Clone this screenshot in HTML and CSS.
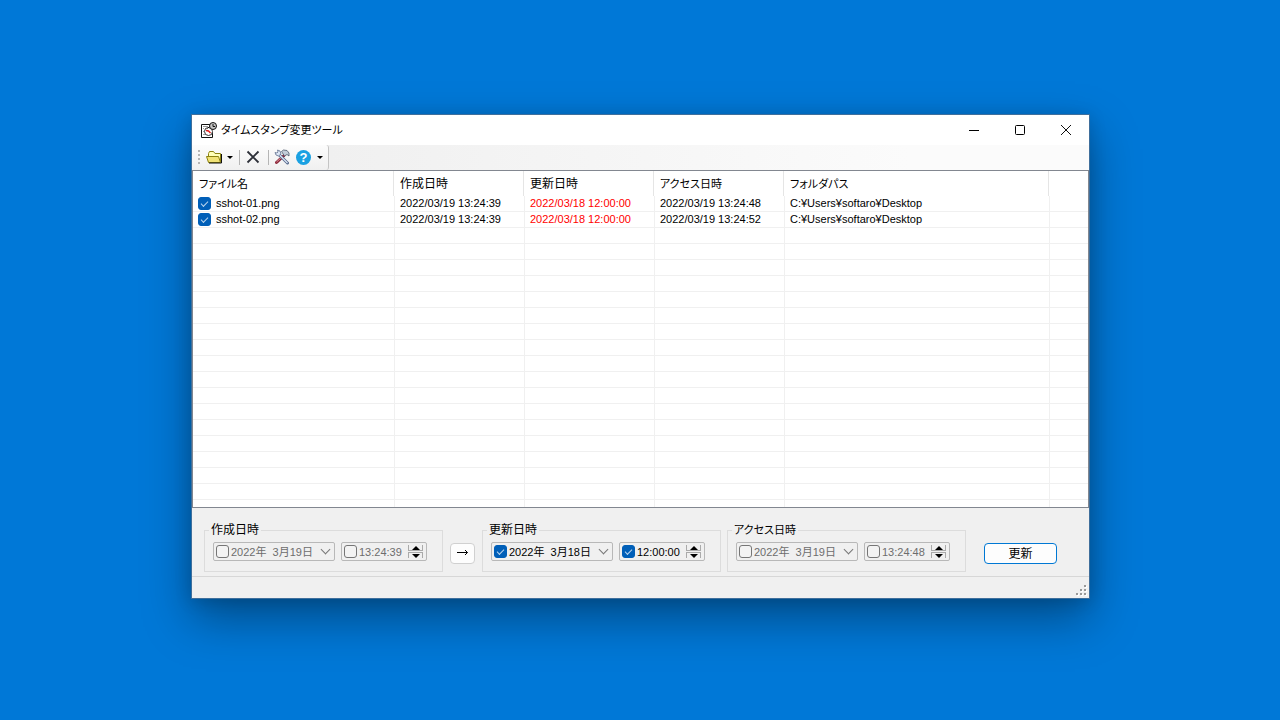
FILE: index.html
```html
<!DOCTYPE html>
<html lang="ja">
<head>
<meta charset="utf-8">
<title>タイムスタンプ変更ツール</title>
<link rel="stylesheet" href="styles.css">
</head>
<body>
<main class="window">
  <header class="titlebar">
    <svg class="app-icon" width="16" height="16" viewBox="0 0 16 16" aria-hidden="true">
      <path d="M9 2.500H.500v13h11V10" fill="#fff" stroke="#111"/>
      <path d="M2 4.500h5M2 6.500h1M2 9.500h1M2 12.500h2" stroke="#999"/>
      <circle cx="7.500" cy="9.500" r="4" fill="#fff" stroke="#333"/>
      <path d="M5 8.500l2.500.5 2 2" fill="none" stroke="#e01818" stroke-width="1.400"/>
      <circle cx="12" cy="4" r="3.500" fill="#c4c4c4" stroke="#111"/>
      <path d="M12 2v2.500h2" fill="none" stroke="#111"/>
      <path d="M8.500 4.500L6.500 6.500" fill="none" stroke="#111"/>
    </svg>
    <h1 class="title">タイムスタンプ変更ツール</h1>
    <div class="caption">
      <button class="cap" aria-label="最小化"><svg width="12" height="12" viewBox="0 0 12 12"><path d="M1 6.500h10" stroke="#000"/></svg></button>
      <button class="cap" aria-label="最大化"><svg width="12" height="12" viewBox="0 0 12 12"><rect x="1.500" y="1.500" width="9" height="9" rx="1" fill="none" stroke="#000"/></svg></button>
      <button class="cap" aria-label="閉じる"><svg width="12" height="12" viewBox="0 0 12 12"><path d="M1 1l10 10M11 1L1 11" stroke="#111"/></svg></button>
    </div>
  </header>

  <div class="toolbar" role="toolbar">
    <div class="strip">
      <span class="grip"></span>
      <button class="tool" aria-label="開く">
        <svg width="17" height="14" viewBox="0 0 17 14"><path d="M2.500 12V3.500l1-2h4l1.500 2h5.500V12" fill="#ffffb8" stroke="#8c8210"/><path d="M2.500 12.500L.500 6.500h12l2 6z" fill="#f1e377" stroke="#8c8210"/><path d="M3 13h12.500V4" fill="none" stroke="#111"/></svg>
      </button>
      <button class="arrow" aria-label="開くメニュー"></button>
      <span class="sep"></span>
      <button class="tool delete" aria-label="削除">
        <svg width="14" height="14" viewBox="0 0 14 14"><path d="M1.500 1.500l11 11M12.500 1.500l-11 11" stroke="#2d3038" stroke-width="1.800"/></svg>
      </button>
      <span class="sep"></span>
      <button class="tool settings" aria-label="設定">
        <svg width="16" height="16" viewBox="0 0 16 16"><path d="M10 6.500L2.500 13.500" stroke="#8c2638" stroke-width="3" stroke-linecap="round"/><path d="M9 7L2.500 13" stroke="#e09aa4"/><path d="M5 5.500l8.500 8.500" stroke="#56688c" stroke-width="3" stroke-linecap="round"/><path d="M5 5.500l8.500 8.500" stroke="#dce6f5" stroke-width="1.200"/><path d="M1 3.500l1 2.500 2.500 1 2.500-2L6 2 3.500 1l.5 2-1 1z" fill="#dce6f5" stroke="#61718e" stroke-width=".8"/><path d="M7.500 2.500l2-1.500 3.500.5 2 2.500v3l-2-1.500-2.500 1.500z" fill="#c3ccd8" stroke="#4d586b" stroke-width=".8"/></svg>
      </button>
      <button class="tool help" aria-label="ヘルプ"><span class="help-mark">?</span></button>
      <button class="arrow" aria-label="ヘルプメニュー"></button>
    </div>
  </div>

  <div class="list">
    <table class="files">
      <colgroup><col class="c-name"><col class="c-date"><col class="c-date"><col class="c-date"><col class="c-path"><col></colgroup>
      <thead><tr><th class="kana">ファイル名</th><th>作成日時</th><th>更新日時</th><th class="kana">アクセス日時</th><th class="kana">フォルダパス</th><th></th></tr></thead>
      <tbody>
        <tr><td><label class="file"><input class="check" type="checkbox" checked>sshot-01.png</label></td><td>2022/03/19 13:24:39</td><td class="changed">2022/03/18 12:00:00</td><td>2022/03/19 13:24:48</td><td>C:¥Users¥softaro¥Desktop</td><td></td></tr>
        <tr><td><label class="file"><input class="check" type="checkbox" checked>sshot-02.png</label></td><td>2022/03/19 13:24:39</td><td class="changed">2022/03/18 12:00:00</td><td>2022/03/19 13:24:52</td><td>C:¥Users¥softaro¥Desktop</td><td></td></tr>
        <tr><td></td><td></td><td></td><td></td><td></td><td></td></tr>
        <tr><td></td><td></td><td></td><td></td><td></td><td></td></tr>
        <tr><td></td><td></td><td></td><td></td><td></td><td></td></tr>
        <tr><td></td><td></td><td></td><td></td><td></td><td></td></tr>
        <tr><td></td><td></td><td></td><td></td><td></td><td></td></tr>
        <tr><td></td><td></td><td></td><td></td><td></td><td></td></tr>
        <tr><td></td><td></td><td></td><td></td><td></td><td></td></tr>
        <tr><td></td><td></td><td></td><td></td><td></td><td></td></tr>
        <tr><td></td><td></td><td></td><td></td><td></td><td></td></tr>
        <tr><td></td><td></td><td></td><td></td><td></td><td></td></tr>
        <tr><td></td><td></td><td></td><td></td><td></td><td></td></tr>
        <tr><td></td><td></td><td></td><td></td><td></td><td></td></tr>
        <tr><td></td><td></td><td></td><td></td><td></td><td></td></tr>
        <tr><td></td><td></td><td></td><td></td><td></td><td></td></tr>
        <tr><td></td><td></td><td></td><td></td><td></td><td></td></tr>
        <tr><td></td><td></td><td></td><td></td><td></td><td></td></tr>
        <tr><td></td><td></td><td></td><td></td><td></td><td></td></tr>
        <tr class="rest"><td></td><td></td><td></td><td></td><td></td><td></td></tr>
      </tbody>
    </table>
  </div>

  <form class="panel">
    <fieldset class="group off">
      <legend>作成日時</legend>
      <div class="fields">
        <div class="field date"><input class="check" type="checkbox" aria-label="作成日を変更"><input class="value" type="text" value="2022年  3月19日" aria-label="作成日"><button class="drop" type="button" aria-label="カレンダー"></button></div>
        <div class="field time"><input class="check" type="checkbox" aria-label="作成時刻を変更"><input class="value" type="text" value="13:24:39" aria-label="作成時刻"><div class="spin"><button class="up" type="button" aria-label="増やす"></button><button class="down" type="button" aria-label="減らす"></button></div></div>
      </div>
    </fieldset>
    <button class="copy" type="button" aria-label="更新日時へコピー"><svg width="13" height="9" viewBox="0 0 13 9"><path d="M1 3.500h10.500M9 1l2.500 2.500L9 6" fill="none" stroke="#000"/></svg></button>
    <fieldset class="group">
      <legend>更新日時</legend>
      <div class="fields">
        <div class="field date"><input class="check" type="checkbox" checked aria-label="更新日を変更"><input class="value" type="text" value="2022年  3月18日" aria-label="更新日"><button class="drop" type="button" aria-label="カレンダー"></button></div>
        <div class="field time"><input class="check" type="checkbox" checked aria-label="更新時刻を変更"><input class="value" type="text" value="12:00:00" aria-label="更新時刻"><div class="spin"><button class="up" type="button" aria-label="増やす"></button><button class="down" type="button" aria-label="減らす"></button></div></div>
      </div>
    </fieldset>
    <fieldset class="group off">
      <legend class="kana">アクセス日時</legend>
      <div class="fields">
        <div class="field date"><input class="check" type="checkbox" aria-label="アクセス日を変更"><input class="value" type="text" value="2022年  3月19日" aria-label="アクセス日"><button class="drop" type="button" aria-label="カレンダー"></button></div>
        <div class="field time"><input class="check" type="checkbox" aria-label="アクセス時刻を変更"><input class="value" type="text" value="13:24:48" aria-label="アクセス時刻"><div class="spin"><button class="up" type="button" aria-label="増やす"></button><button class="down" type="button" aria-label="減らす"></button></div></div>
      </div>
    </fieldset>
    <button class="update" type="button">更新</button>
  </form>

  <footer class="status">
    <svg width="12" height="12" viewBox="0 0 12 12" aria-hidden="true"><path d="M9 1h2v2H9zM5 5h2v2H5zM9 5h2v2H9zM1 9h2v2H1zM5 9h2v2H5zM9 9h2v2H9z" fill="#fff"/><path d="M8 0h2v2H8zM4 4h2v2H4zM8 4h2v2H8zM0 8h2v2H0zM4 8h2v2H4zM8 8h2v2H8z" fill="#999"/></svg>
  </footer>
</main>
</body>
</html>
```
FILE: styles.css
```css
* { box-sizing: border-box; }

body {
  margin: 0;
  min-height: 100vh;
  padding: 114px 190px 0 191px;
  background: #0078d7;
  color: #000;
  font: 11px/16px "Liberation Sans", "Noto Sans CJK JP", sans-serif;
  font-feature-settings: "palt";
}

button, input {
  margin: 0;
  padding: 0;
  border: 0;
  background: none;
  color: inherit;
  font: inherit;
  font-feature-settings: inherit;
}

.window {
  border: 1px solid #3f6f9c;
  background: #f0f0f0;
  box-shadow: 0 20px 44px rgba(0, 0, 0, 0.36), 0 2px 16px rgba(0, 0, 0, 0.14);
}

.titlebar {
  display: flex;
  align-items: center;
  height: 30px;
  padding: 0 0 1px 9px;
  background: #fff;
}

.title {
  margin: 0 auto 0 4px;
  font-size: 11px;
  font-weight: 400;
}

.caption { display: flex; }

.cap {
  display: flex;
  align-items: center;
  justify-content: center;
  width: 46px;
  height: 28px;
}

.toolbar {
  display: flex;
  height: 25px;
  background: linear-gradient(90deg, #f0f0f0 136px, #fbfbfb 80%);
}

.strip {
  display: flex;
  align-items: center;
  width: 137px;
  padding: 0 0 1px 6px;
  border-right: 1px solid #c4c4c4;
  border-radius: 0 3px 3px 0;
  background: linear-gradient(#fcfcfc, #f0f0f0);
}

.grip {
  width: 2px;
  height: 15px;
  margin-right: 6px;
  background: repeating-linear-gradient(#b5b5b5 0 2px, transparent 2px 4px);
}

.tool { display: flex; }

.arrow {
  width: 6px;
  margin-left: 4px;
  border: 3px solid transparent;
  border-top-color: #000;
  border-bottom-width: 0;
}

.sep {
  width: 1px;
  height: 15px;
  margin: 0 6px;
  background: #b5b5b5;
}

.delete { margin-right: 2px; }

.settings { margin-left: -1px; }

.help { margin: 0 2px 0 6px; }

.help-mark {
  width: 15px;
  height: 15px;
  border-radius: 50%;
  background: #1ba1e2;
  color: #fff;
  font: bold 13px/15px "Liberation Sans", sans-serif;
  text-align: center;
}

.list {
  border: 1px solid #828790;
  background: #fff;
}

.files {
  width: 100%;
  table-layout: fixed;
  border-collapse: separate;
  border-spacing: 0;
}

.c-name { width: 201px; }
.c-date { width: 130px; }
.c-path { width: 265px; }

.files th {
  height: 25px;
  padding: 0 6px;
  border-right: 1px solid #e5e5e5;
  font-size: 12px;
  font-weight: 400;
  text-align: left;
}

.files th:last-child { border-right: 0; }

.files td {
  height: 16px;
  padding: 0 5px;
  border-bottom: 1px solid #f0f0f0;
  border-left: 1px solid #f0f0f0;
  line-height: 15px;
  white-space: nowrap;
}

.files td:first-child { border-left: 0; }
.files .rest td { height: 7px; border-bottom: 0; }
.files .changed { color: #f00; }

.files .kana, .group .kana { font-size: 11px; }

.file {
  display: flex;
  align-items: center;
  gap: 5px;
  height: 15px;
}

.check {
  display: flex;
  align-items: center;
  justify-content: center;
  flex: none;
  width: 13px;
  height: 13px;
  border: 1px solid #767676;
  border-radius: 3px;
  background: #f3f3f3;
  appearance: none;
}

.check:checked {
  border-color: #005fb8;
  background: #005fb8;
}

.check:checked::after {
  content: "";
  width: 6px;
  height: 3px;
  margin-bottom: 2px;
  border: solid #b9d5ee;
  border-width: 0 0 1px 1px;
  transform: rotate(-45deg);
}

.panel {
  display: flex;
  padding: 14px 12px 4px;
}

.group {
  width: 239px;
  min-width: 0;
  margin: 0 7px 0 0;
  padding: 4px 4px 10px;
  border: 1px solid #dcdcdc;
}

.copy + .group { margin-right: 6px; }

.group + .group { margin-right: 18px; }

.group legend {
  padding: 0 2px;
  font-size: 12px;
}

.fields {
  display: flex;
  gap: 6px;
  padding-left: 4px;
}

.field {
  display: flex;
  align-items: center;
  height: 19px;
  padding: 0 3px 0 2px;
  border: 1px solid #b8b8b8;
  border-radius: 2px;
}

.date { width: 122px; }
.time { width: 86px; }
.off .field { color: #6d6d6d; }

.value {
  flex: 1;
  min-width: 0;
  height: 16px;
  padding-left: 2px;
  white-space: pre;
}

.drop {
  width: 7px;
  height: 7px;
  margin: 0 2px 4px 4px;
  border: solid #777;
  border-width: 0 1px 1px 0;
  transform: rotate(45deg);
}

.spin {
  display: flex;
  flex-direction: column;
  gap: 1px;
  width: 15px;
}

.up, .down {
  display: flex;
  justify-content: center;
  align-items: center;
  height: 6px;
  border: 1px solid #aaa;
  border-top: 0;
}

.down {
  border-top: 1px solid #aaa;
  border-bottom: 0;
}

.up::after, .down::after {
  content: "";
  border: 4px solid transparent;
}

.up::after {
  border-top-width: 0;
  border-bottom-color: #000;
}

.down::after {
  border-top-color: #000;
  border-bottom-width: 0;
}

.copy, .update {
  display: flex;
  align-items: center;
  justify-content: center;
  height: 21px;
  margin-top: 21px;
  border: 1px solid #d0d0d0;
  border-radius: 4px;
  background: #fdfdfd;
}

.copy {
  width: 25px;
  margin-right: 7px;
}

.update {
  width: 73px;
  border-color: #0078d4;
  font-size: 12px;
}

.status {
  display: flex;
  align-items: flex-end;
  justify-content: flex-end;
  height: 22px;
  padding: 0 1px 1px;
  border-top: 1px solid #d7d7d7;
}
```
